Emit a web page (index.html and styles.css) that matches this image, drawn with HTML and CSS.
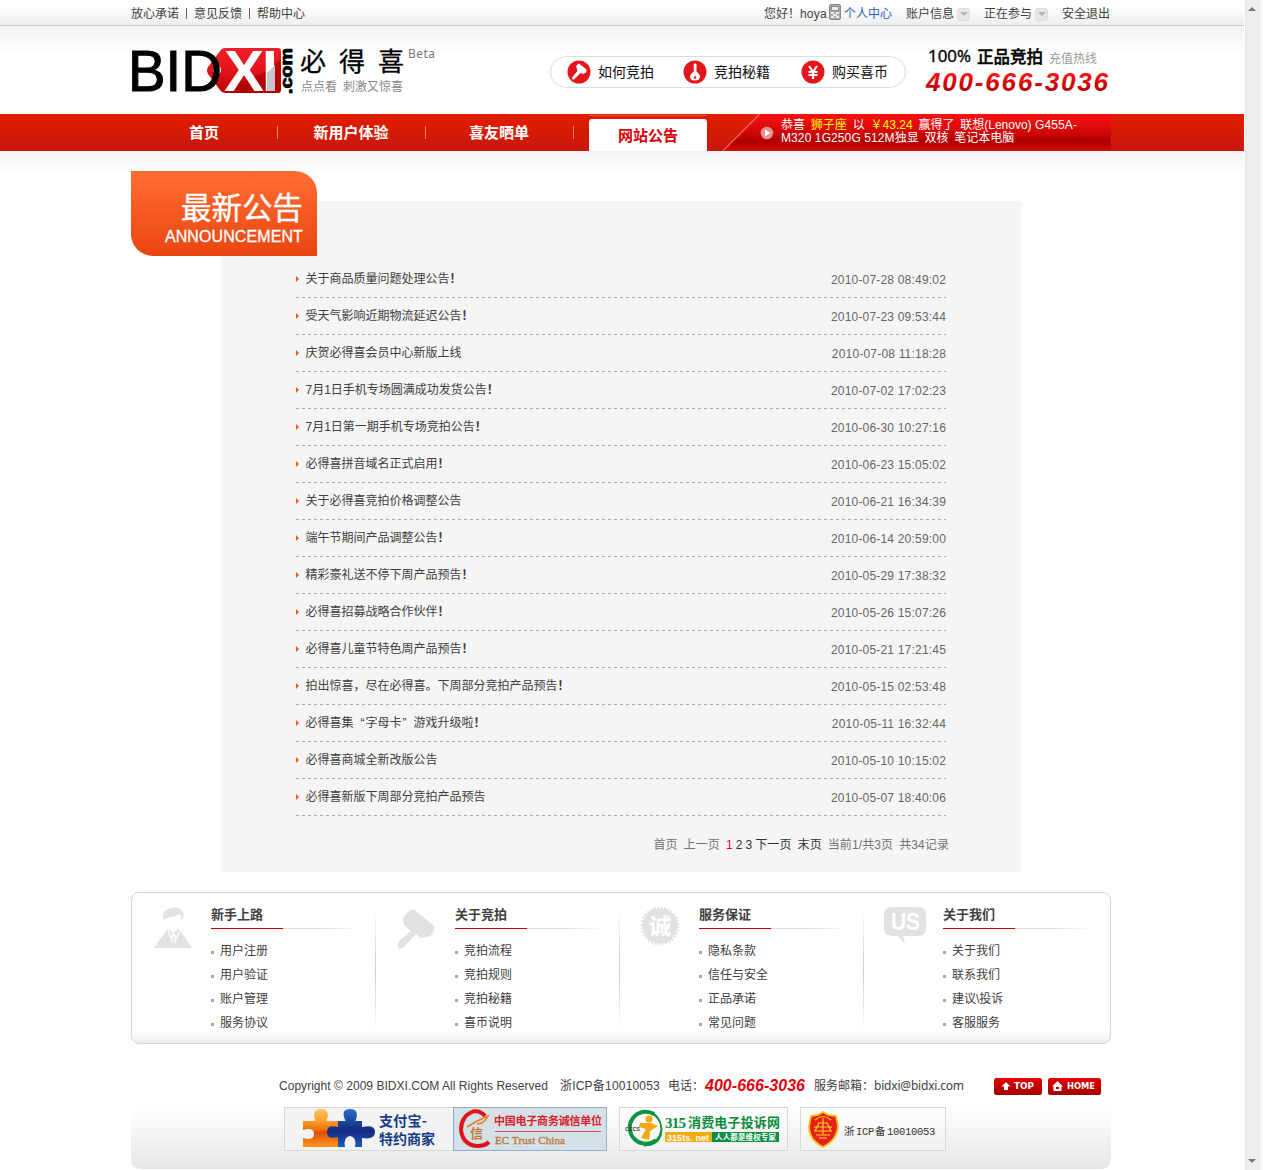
FILE: index.html
```html
<!DOCTYPE html>
<html lang="zh-CN">
<head>
<meta charset="utf-8">
<title>网站公告 - 必得喜</title>
<link rel="stylesheet" href="styles.css">
</head>
<body>
<div class="page">
  <div class="topbar">
    <div class="wrap topbar-in">
      <nav class="top-left"><a>放心承诺</a><i></i><a>意见反馈</a><i></i><a>帮助中心</a></nav>
      <nav class="top-right">
        <span class="hello">您好！</span><span class="user">hoya</span>
        <svg class="phone-ico" width="12" height="16" viewBox="0 0 12 16"><rect x=".5" y=".5" width="11" height="15" rx="1.5" fill="#aaa" stroke="#888"/><rect x="2.5" y="2.5" width="7" height="4" fill="#eee" stroke="#888"/><path d="M2 9h3M7 9h3M4 11h4M2 13h3M7 13h3" stroke="#fff" stroke-width="1.4"/></svg>
        <a class="center">个人中心</a><a>账户信息</a><b class="drop"></b><a class="join">正在参与</a><b class="drop"></b><a class="quit">安全退出</a>
      </nav>
    </div>
  </div>

  <header class="header wrap">
    <svg class="logo" width="320" height="56" viewBox="131 44 320 56">
      <defs>
        <linearGradient id="tag" x1="0" y1="0" x2="0" y2="1"><stop offset="0" stop-color="#f0202a"/><stop offset=".5" stop-color="#e3141c"/><stop offset="1" stop-color="#b80000"/></linearGradient>
        <linearGradient id="tel" x1="0" y1="0" x2="0" y2="1"><stop offset=".2" stop-color="#ff1414"/><stop offset=".8" stop-color="#b80000"/></linearGradient>
      </defs>
      <path d="M225 48H278Q281 48 281 52V89Q281 93 278 93H225Q222 93 220 90L208 74Q206 70 208 67L220 51Q222 48 225 48Z" fill="url(#tag)"/>
      <path d="M281 59Q262 78 227 85V93H278Q281 93 281 89Z" fill="#a80000" opacity=".65"/>
      <circle cx="217" cy="70" r="4" fill="#fff"/>
      <text class="logo-bid" x="128" y="91" textLength="94" lengthAdjust="spacingAndGlyphs">BID</text>
      <text class="logo-xi" x="224" y="91" textLength="40" lengthAdjust="spacingAndGlyphs">X</text>
      <text class="logo-xi" x="262" y="91">I</text>
      <path d="M275 65V91H267V73Z" fill="#c9c5cf"/>
      <text class="logo-com" transform="translate(292 94) rotate(-90)" textLength="46" lengthAdjust="spacingAndGlyphs">.com</text>
      <text class="logo-cn" y="71"><tspan x="300">必</tspan><tspan x="339">得</tspan><tspan x="378">喜</tspan></text>
      <text class="logo-sub" y="91"><tspan x="301">点点看</tspan><tspan x="343">刺激又惊喜</tspan></text>
      <text class="logo-beta" x="408" y="58" textLength="27">Beta</text>
    </svg>
    <div class="pill">
      <a><svg width="24" height="24" viewBox="0 0 24 24"><circle cx="12" cy="12" r="11.5" fill="#e2161c"/><path d="M9 6 12 3.500 19.500 9.500V12L16.500 14 13.500 13 7 19.500Q4.500 20 5 17.500L10.500 11Z" fill="#fff"/></svg>如何竞拍</a>
      <a><svg width="24" height="24" viewBox="0 0 24 24"><circle cx="12" cy="12" r="11.500" fill="#e2161c"/><path d="M10.800 13V4.500L12 3 13.500 4.500V13" fill="#fff"/><path d="M12 11.500C14 11.500 17 14 17 17Q16.500 20.500 12 20.500 7.500 20.500 7 17C7 14 10 11.500 12 11.500Z" fill="#fff"/><circle cx="12" cy="17.500" r="1.300" fill="#e2161c"/></svg>竞拍秘籍</a>
      <a><svg width="24" height="24" viewBox="0 0 24 24"><circle cx="12" cy="12" r="11.500" fill="#e2161c"/><path d="M8 6 12 12 16 6M12 11V19M7.500 12H16.500M7.500 15H16.500" fill="none" stroke="#fff" stroke-width="2"/></svg>购买喜币</a>
    </div>
    <svg class="hotline" width="190" height="56" viewBox="925 44 190 56">
      <text class="hot-a" x="928" y="62" textLength="43" lengthAdjust="spacingAndGlyphs">100%</text>
      <text class="hot-a" x="977" y="63" textLength="66">正品竞拍</text>
      <text class="hot-b" x="1049" y="63">充值热线</text>
      <text class="hot-c" x="926" y="91" textLength="182">400-666-3036</text>
    </svg>
  </header>

  <div class="navbar">
    <div class="wrap nav-in">
      <a>首页</a><a>新用户体验</a><a>喜友晒单</a><div class="tab-cell"><a class="tab">网站公告</a></div>
      <div class="news">
        <svg class="news-edge" width="38" height="37" viewBox="0 0 38 37"><path d="M.5 37 37.500 0" stroke="#f27a68" stroke-width="1.500"/></svg>
        <svg class="news-ico" width="14" height="14" viewBox="0 0 14 14"><circle cx="7" cy="7" r="6.300" fill="#e89090"/><path d="M5 3.500 10.500 7 5 10.500Z" fill="#fff"/></svg>
        <div class="news-text">
          <div>恭喜 <em>狮子座</em> 以 <em>￥43.24</em> 赢得了 联想(Lenovo)<span class="tight"> G455A-</span></div>
          <div><span class="tight">M320 1G250G 512M</span>独显 双核 笔记本电脑</div>
        </div>
      </div>
    </div>
  </div>

  <main class="wrap main">
    <div class="title-badge"><h1>最新公告</h1><p>ANNOUNCEMENT</p></div>
    <section class="panel">
      <ul class="list">
        <li><a>关于商品质量问题处理公告<s>！</s></a><time>2010-07-28 08:49:02</time></li>
        <li><a>受天气影响近期物流延迟公告<s>！</s></a><time>2010-07-23 09:53:44</time></li>
        <li><a>庆贺必得喜会员中心新版上线</a><time>2010-07-08 11:18:28</time></li>
        <li><a>7月1日手机专场圆满成功发货公告<s>！</s></a><time>2010-07-02 17:02:23</time></li>
        <li><a>7月1日第一期手机专场竞拍公告<s>！</s></a><time>2010-06-30 10:27:16</time></li>
        <li><a>必得喜拼音域名正式启用<s>！</s></a><time>2010-06-23 15:05:02</time></li>
        <li><a>关于必得喜竞拍价格调整公告</a><time>2010-06-21 16:34:39</time></li>
        <li><a>端午节期间产品调整公告<s>！</s></a><time>2010-06-14 20:59:00</time></li>
        <li><a>精彩豪礼送不停下周产品预告<s>！</s></a><time>2010-05-29 17:38:32</time></li>
        <li><a>必得喜招募战略合作伙伴<s>！</s></a><time>2010-05-26 15:07:26</time></li>
        <li><a>必得喜儿童节特色周产品预告<s>！</s></a><time>2010-05-21 17:21:45</time></li>
        <li><a>拍出惊喜，尽在必得喜。下周部分竞拍产品预告<s>！</s></a><time>2010-05-15 02:53:48</time></li>
        <li><a>必得喜集<span class="q">“</span>字母卡<span class="q close">”</span>游戏升级啦<s>！</s></a><time>2010-05-11 16:32:44</time></li>
        <li><a>必得喜商城全新改版公告</a><time>2010-05-10 10:15:02</time></li>
        <li><a>必得喜新版下周部分竞拍产品预告</a><time>2010-05-07 18:40:06</time></li>
      </ul>
      <div class="pager"><span>首页</span><span>上一页</span><span class="nums"><b>1</b><a>2</a><a>3</a><a>下一页</a></span><a>末页</a><span>当前1/共3页</span><span>共34记录</span></div>
    </section>
  </main>

  <section class="wrap help">
    <div class="col">
      <svg class="ico" width="46" height="46" viewBox="0 0 46 46" fill="#e2e2e2"><path d="M12.500 14.500Q10 6 17 3Q24 0 29 3Q34 6 32 12L30 16Q31 10 28.500 8Q24 11 19 11Q14 12 12.500 14.500ZM3 42 17 22.500 22 27 28 22.500 41 42Z"/><path d="M17 23 19.500 32.500 22.500 27.500 26 32.500 29 23M22 28 20.500 37M23 28 25 37" fill="none" stroke="#fff" stroke-width="1.200"/></svg>
      <div><h2>新手上路</h2><ul><li>用户注册</li><li>用户验证</li><li>账户管理</li><li>服务协议</li></ul></div>
    </div>
    <div class="col">
      <svg class="ico" width="46" height="46" viewBox="0 0 46 46" fill="#e2e2e2"><path d="M16 4Q18 3 20 4L38 19Q40 20 39 23L38 27Q36 30 33 31L27 32Q26 32 24 31L21 28 9 41Q7 43 4 42Q2 39 3 36L16 25 10 20Q8 18 8 15V13Q9 10 11 8Z"/></svg>
      <div><h2>关于竞拍</h2><ul><li>竞拍流程</li><li>竞拍规则</li><li>竞拍秘籍</li><li>喜币说明</li></ul></div>
    </div>
    <div class="col">
      <svg class="ico" width="46" height="46" viewBox="0 0 46 46"><circle cx="21" cy="20" r="17.500" fill="#e2e2e2"/><circle cx="21" cy="20" r="18" fill="none" stroke="#e2e2e2" stroke-width="3" stroke-dasharray="1.770 1.770"/><text class="seal" x="10" y="28">诚</text></svg>
      <div><h2>服务保证</h2><ul><li>隐私条款</li><li>信任与安全</li><li>正品承诺</li><li>常见问题</li></ul></div>
    </div>
    <div class="col">
      <svg class="ico" width="46" height="46" viewBox="0 0 46 46"><path d="M9 1H35Q43 1 43 9V22Q43 30 35 30H20L22 38 15 30H9Q1 30 1 22V9Q1 1 9 1Z" fill="#e2e2e2"/><text class="us" x="8" y="24" textLength="29" lengthAdjust="spacingAndGlyphs">US</text></svg>
      <div><h2>关于我们</h2><ul><li>关于我们</li><li>联系我们</li><li>建议\投诉</li><li>客服服务</li></ul></div>
    </div>
  </section>

  <footer class="wrap footer">
    <div class="copy">
      <span class="c1">Copyright © 2009 BIDXI.COM All Rights Reserved</span><span class="c2">浙ICP备10010053</span><span class="c3">电话：</span><strong class="c4">400-666-3036</strong><span class="c5">服务邮箱：</span><span class="c6">bidxi@bidxi.com</span>
      <svg class="c7" width="48" height="17" viewBox="0 0 48 17"><defs><linearGradient id="btn" x1="0" y1="0" x2="0" y2="1"><stop offset="0" stop-color="#e60000"/><stop offset="1" stop-color="#a00000"/></linearGradient></defs><rect width="48" height="17" rx="2.500" fill="url(#btn)"/><path d="M12 4 16.500 8.500H14V12H10V8.500H7.500Z" fill="#fff"/><text class="btn-t" x="20" y="11" textLength="20" lengthAdjust="spacingAndGlyphs">TOP</text></svg>
      <svg width="53" height="17" viewBox="0 0 53 17"><rect width="53" height="17" rx="2.500" fill="url(#btn)"/><path d="M9.500 3 15 8.500H13.500V13H5.500V8.500H4ZM8 9V11H11V9Z" fill="#fff" fill-rule="evenodd"/><text class="btn-t" x="19" y="11" textLength="28" lengthAdjust="spacingAndGlyphs">HOME</text></svg>
    </div>
    <div class="certs">
      <svg width="170" height="44" viewBox="284 1107 170 44">
        <defs><linearGradient id="org" x1="0" y1="0" x2="0" y2="1"><stop offset="0" stop-color="#ffc860"/><stop offset=".3" stop-color="#ffa030"/><stop offset=".58" stop-color="#e86a00"/><stop offset=".6" stop-color="#dc4c00"/><stop offset="1" stop-color="#ff9820"/></linearGradient>
        <linearGradient id="blu" x1="0" y1="0" x2="0" y2="1"><stop offset="0" stop-color="#2a70c8"/><stop offset=".55" stop-color="#142a80"/><stop offset="1" stop-color="#1c58b8"/></linearGradient></defs>
        <rect x="284.500" y="1107.500" width="169" height="43" fill="#f3f3f3" stroke="#d8d8d8"/>
        <path d="M303 1121H315.500Q311 1109 321 1109Q331 1109 326.500 1121H338V1147H303V1138Q314 1141 314 1134Q314 1127 303 1130Z" fill="url(#org)"/>
        <path d="M338 1121H345.500Q340 1109 350 1109Q360 1109 355.500 1121H362V1127Q375 1124 375 1132Q375 1140 362 1138V1147H355Q357 1137 350 1136Q343 1137 345 1147H338V1137Q327 1140 327 1132Q327 1124 338 1127Z" fill="url(#blu)"/>
        <text class="pay" x="379" y="1126" textLength="48">支付宝-</text><text class="pay" x="379" y="1144">特约商家</text>
      </svg>
      <svg width="154" height="44" viewBox="453 1107 154 44">
        <rect x="453.500" y="1107.500" width="153" height="43" fill="#d5e0e7" stroke="#8fb0cc"/>
        <path d="M485 1116Q480 1110 473 1111.500Q461 1116 461 1130Q463 1145 477 1146Q485 1146 489 1142" fill="none" stroke="#e0121a" stroke-width="4"/>
        <path d="M467 1127Q476 1121 488 1116Q484 1124 477 1124" fill="none" stroke="#ee7a28" stroke-width="1.600"/>
        <text class="xin" x="470" y="1138">信</text>
        <text class="ec-cn" x="494" y="1125" textLength="108">中国电子商务诚信单位</text>
        <path d="M495 1131.500H601" stroke="#d85058"/>
        <text class="ec-en" x="495" y="1144" textLength="70">EC Trust China</text>
      </svg>
      <svg class="gap" width="170" height="44" viewBox="619 1107 170 44">
        <defs><linearGradient id="card" x1="0" y1="0" x2="0" y2="1"><stop offset="0" stop-color="#fff"/><stop offset="1" stop-color="#f0f0f0"/></linearGradient></defs>
        <rect x="619.500" y="1107.500" width="168" height="43" fill="url(#card)" stroke="#d8d8d8"/>
        <path d="M654 1114A16 16 0 1 0 656 1140" fill="none" stroke="#0a9440" stroke-width="4"/><path d="M645 1111Q661 1116 661 1129Q660 1142 644 1146Q662 1146 662 1129Q660 1111 645 1111Z" fill="#0a9440" stroke="#0a9440"/>
        <circle cx="649" cy="1119" r="3.500" fill="#f2a910"/><path d="M640 1123H651L658 1126 650 1131 649 1140 641 1138 646 1129 639 1127Z" fill="#f2a910"/>
        <text class="cecs" x="625" y="1131" textLength="15">CECS</text>
        <text class="n315" x="665" y="1128" textLength="21">315</text><text class="t315" x="688" y="1127" textLength="92">消费电子投诉网</text>
        <rect x="665" y="1132" width="47" height="10" fill="#f2ad12"/><rect x="712" y="1132" width="67" height="10" fill="#0a9040"/>
        <text class="u315" x="667" y="1140.500" textLength="42">315ts. net</text><text class="s315" x="715" y="1140" textLength="61">人人都是维权专家</text>
      </svg>
      <svg class="gap2" width="147" height="44" viewBox="800 1107 147 44">
        <rect x="800.500" y="1107.500" width="145" height="43" fill="url(#card)" stroke="#d8d8d8"/>
        <path d="M823 1112 828 1115 836 1116 838 1126Q837 1140 823 1147Q809 1140 809 1126L811 1116 818 1115Z" fill="#e8201a" stroke="#f4c20c" stroke-width="1.800"/>
        <path d="M815 1120Q823 1113 831 1120M823 1118V1134M818 1123H828M814 1127H832M814 1131H832M816 1135H830M819 1138H827M819 1123 815 1131M827 1123 831 1131" fill="none" stroke="#ffd023" stroke-width="1.200"/>
        <text class="icp" y="1135"><tspan x="844">浙</tspan><tspan x="856 862 868">ICP</tspan><tspan x="875">备</tspan><tspan x="887 893 899 905 911 917 923 929">10010053</tspan></text>
      </svg>
    </div>
  </footer>
</div>
<aside class="scrollbar"><i class="up"></i><i class="down"></i></aside>
</body>
</html>
```
FILE: styles.css
```css
* { box-sizing: border-box; }
body {
  margin: 0; display: flex; width: 1263px; height: 1170px; overflow: hidden; background: #fff;
  font: 12px/14px "Liberation Sans", "Noto Sans CJK SC", sans-serif; color: #404040;
}
h1, h2, p, ul { margin: 0; padding: 0; list-style: none; }
svg { display: block; flex: none; overflow: visible; }
.page { width: 1244px; height: 1170px; flex: none; background: linear-gradient(#f3f3f3, #fff) 0 26px / 100% 30px no-repeat; }
.wrap { width: 980px; margin-left: 131px; }

/* top bar */
.topbar { height: 26px; border-bottom: 1px solid #c9c8c3; background: linear-gradient(#fff 20%, #eeeeec); }
.topbar-in { display: flex; justify-content: space-between; height: 26px; white-space: nowrap; }
.top-left, .top-right { display: flex; align-items: center; height: 26px; }
.top-left { padding-top: 1px; }
.top-left a { width: 48px; }
.top-left i { width: 1px; height: 11px; margin: 0 7px; background: #7c5570; }
.top-right { padding-top: 2px; }
.top-right a { width: 48px; margin-left: 14px; }
.top-right .hello { width: 36px; }
.top-right .user { width: 29px; letter-spacing: .2px; }
.phone-ico { margin-top: -4px; }
.top-right .center { color: #2a62c0; margin-left: 3px; }
.drop { width: 13px; height: 13px; margin-left: 3px; background: #e6e6e6; border: 1px solid #ddd; border-radius: 3px; display: flex; align-items: center; justify-content: center; }
.drop::after { content: ""; border: 4px solid transparent; border-top-color: #b5b5b5; border-bottom: 0; }
.top-right .quit { margin-right: 1px; }

/* header */
.header { display: flex; align-items: flex-start; height: 88px; }
.logo { margin-top: 18px; }
.logo-bid { font: 57px "Liberation Sans"; fill: #000; stroke: #000; stroke-width: 1; }
.logo-xi { font: bold 57px "Liberation Sans"; fill: #fff; }
.logo-com { font: bold 17px "Liberation Sans"; fill: #000; stroke: #000; stroke-width: .9; }
.logo-cn { font: 26px "Noto Sans CJK SC"; fill: #000; stroke: #000; stroke-width: .3; }
.logo-sub { font: 12px "Noto Sans CJK SC"; fill: #8a8a8a; }
.logo-beta { font: 12px "Noto Sans"; fill: #777; }
.pill { display: flex; width: 356px; height: 32px; margin: 30px 0 0 99px; padding-left: 16px; border: 1px solid #ddd; border-radius: 16px; background: #fff; font-size: 14px; color: #111; }
.pill a { display: flex; flex: none; align-items: center; width: 116px; gap: 7px; padding-bottom: 1px; white-space: nowrap; }
.pill a:nth-child(2) { width: 118px; }
.pill a:last-child { width: 84px; }
.hotline { margin: 18px -4px 0 19px; }
.hot-a { font: 500 16.500px "Open Sans", "Noto Sans CJK SC"; fill: #000; stroke: #000; stroke-width: .4; }
.hot-b { font: 12px "Noto Sans CJK SC"; fill: #999; }
.hot-c { font: italic bold 26px "Liberation Sans"; fill: url(#tel); }

/* navigation */
.navbar { height: 37px; background: linear-gradient(#e21d00, #c8180c); }
.nav-in { display: flex; height: 37px; color: #fff; }
.nav-in > a { width: 148px; padding-right: 2px; font: bold 15px/35px "Noto Sans CJK SC"; text-align: center; background: linear-gradient(#f2857a, #f2857a) right 0 center / 1px 13px no-repeat; }
.nav-in > a:first-child { width: 147px; padding-right: 1px; }
.tab-cell { width: 118px; margin-left: 15px; padding-top: 5px; background: linear-gradient(#f0503c, #f0503c) 0 1px / 100% 1px no-repeat; }
.tab { display: block; height: 32px; background: #fff; border-radius: 3px 3px 0 0; color: #d9000b; font: bold 15px/32px "Noto Sans CJK SC"; text-align: center; }
.news { display: flex; width: 389px; height: 37px; margin-left: 15px; background: linear-gradient(#fc1010, #d00808 50%, #b00000 75%, #d00808); clip-path: polygon(37px 0, 100% 0, 100% 100%, 0 100%); }
.news-ico { margin-top: 12px; }
.news-text { margin: 5px 0 0 7px; font-size: 12px; line-height: 13px; white-space: nowrap; word-spacing: 2.500px; }
.news-text .tight { word-spacing: 0; letter-spacing: .1px; }
.news-text em { font-style: normal; color: #ff0; }

/* announcements */
.main { height: 721px; padding-top: 20px; position: relative; display: flex; }
.main::before { content: ""; position: absolute; inset: 0 auto auto -131px; width: 1244px; height: 24px; background: linear-gradient(#f4f4f4, #fff); }
.title-badge { position: relative; z-index: 1; flex: none; width: 186px; height: 85px; margin-right: -96px; padding: 16px 14px 0 0; border-radius: 0 22px 0 22px; background: linear-gradient(#ff6e32, #ea4511); color: #fff; text-align: right; white-space: nowrap; }
.title-badge h1 { font: 30.500px/38px "Noto Sans CJK SC"; -webkit-text-stroke: .4px #fff; }
.title-badge p { padding-top: 2px; font-size: 16px; line-height: 19px; letter-spacing: .1px; -webkit-text-stroke: .3px #fff; }
.panel { width: 800px; height: 671px; margin-top: 30px; padding: 60px 75px 0; background: #f5f5f5; }
.list li { display: flex; justify-content: space-between; align-items: center; height: 37px; padding-left: 10px; white-space: nowrap;
  background: repeating-linear-gradient(90deg, #aaa 0 3px, transparent 3px 6px) 0 100% / 100% 1px no-repeat; position: relative; }
.list li::before { content: ""; position: absolute; left: 0; top: 15px; border: 3px solid transparent; border-left-color: #ff5400; border-right: 0; }
.list a { padding-bottom: 2px; margin-left: -.5px; }
.list s { text-decoration: none; font-weight: 700; }
.q { display: inline-block; width: 12px; padding-right: 1px; text-align: right; }
.q.close { padding: 0 0 0 1px; text-align: left; }
.list time { color: #666; letter-spacing: .19px; padding-top: 1px; }
.pager { display: flex; gap: 6px; margin: 22px -3px 0 0; justify-content: flex-end; color: #737373; white-space: nowrap; letter-spacing: .1px; }
.pager a { color: #333; }
.pager .nums { display: flex; gap: 3px; }
.pager b { font-weight: 400; color: #f00030; }

/* help columns */
.help { display: flex; height: 152px; margin-top: 20px; border: 1px solid #d5d5d5; border-radius: 8px; background: linear-gradient(#fff 92%, #ececec); }
.col { display: flex; width: 244px; padding: 12px 0 0 19px; background: linear-gradient(#fff, #ccc 50%, #fff) right 0 top 15px / 1px 125px no-repeat; }
.col:last-child { background: none; }
.ico { margin: 1px 14px 0 0; }
.col > div { width: 150px; }
.col h2 { height: 24px; font: bold 13px/18px "Noto Sans CJK SC"; background: linear-gradient(90deg, #c00 72px, #ddd 72px 110px, #fff) 0 100% / 100% 1px no-repeat; }
.col ul { padding-top: 10px; }
.col li { height: 24px; line-height: 24px; padding-left: 9px; background: linear-gradient(#aaa, #aaa) 0 12px / 3px 3px no-repeat; }
.seal { font: bold 22px "Noto Sans CJK SC"; fill: #fff; }
.us { font: bold 24px "Liberation Sans"; fill: #fff; }

/* footer */
.footer { height: 125px; padding-top: 33px; background: linear-gradient(#fff, #e7e7e7) 0 62px / 100% 63px no-repeat; border-radius: 0 0 9px 9px; }
.copy { display: flex; align-items: center; height: 18px; padding-left: 148px; white-space: nowrap; }
.copy span, .copy strong { flex: none; }
.c1 { width: 281px; letter-spacing: .03px; }
.c2 { width: 108px; letter-spacing: .2px; }
.c3 { width: 37px; }
.c4 { width: 109px; font: italic bold 16px "Liberation Sans"; letter-spacing: .03px; color: #e2000c; }
.c5 { width: 60px; }
.c6 { width: 120px; padding-bottom: 2px; font: 12px "Noto Sans"; letter-spacing: -.2px; }
.c7 { margin-right: 6px; }
.btn-t { font: bold 8px "DejaVu Sans"; fill: #fff; }
.certs { display: flex; margin: 12px 0 0 153px; }
.certs svg:nth-child(2) { margin-left: -1px; }
.certs .gap { margin-left: 12px; }
.certs .gap2 { margin-left: 11px; }
.pay { font: bold 14px "Noto Sans CJK SC"; fill: #153a86; }
.xin { font: bold 13px "Noto Sans CJK SC"; fill: #c07830; }
.ec-cn { font: bold 11px "Noto Sans CJK SC"; fill: #d8202a; }
.ec-en { font: 11px "Liberation Serif"; fill: #b87838; stroke: #b87838; stroke-width: .3; }
.cecs { font: bold 5.500px "Liberation Sans"; fill: #444; }
.n315 { font: bold 15px "Liberation Serif"; fill: #0a8c3c; }
.t315 { font: bold 13px "Noto Sans CJK SC"; fill: #0a8c3c; }
.u315 { font: bold 9px "Liberation Sans"; fill: #fff; }
.s315 { font: bold 7.500px "Noto Sans CJK SC"; fill: #fff; }
.icp { font: 10.500px "Liberation Mono", "Noto Sans CJK SC"; fill: #333; }

/* page scrollbar */
.scrollbar { width: 19px; height: 1170px; display: flex; flex-direction: column; justify-content: space-between; align-items: center; padding: 7px 3px 7px 0; background: linear-gradient(90deg, #fff 1px, #e5e5e5 1px 2px, #eee 2px 16px, #f8f8f8 17px); }
.up, .down { border: 4px solid transparent; }
.up { border-top: 0; border-bottom-color: #777; }
.down { border-bottom: 0; border-top-color: #777; }
```
